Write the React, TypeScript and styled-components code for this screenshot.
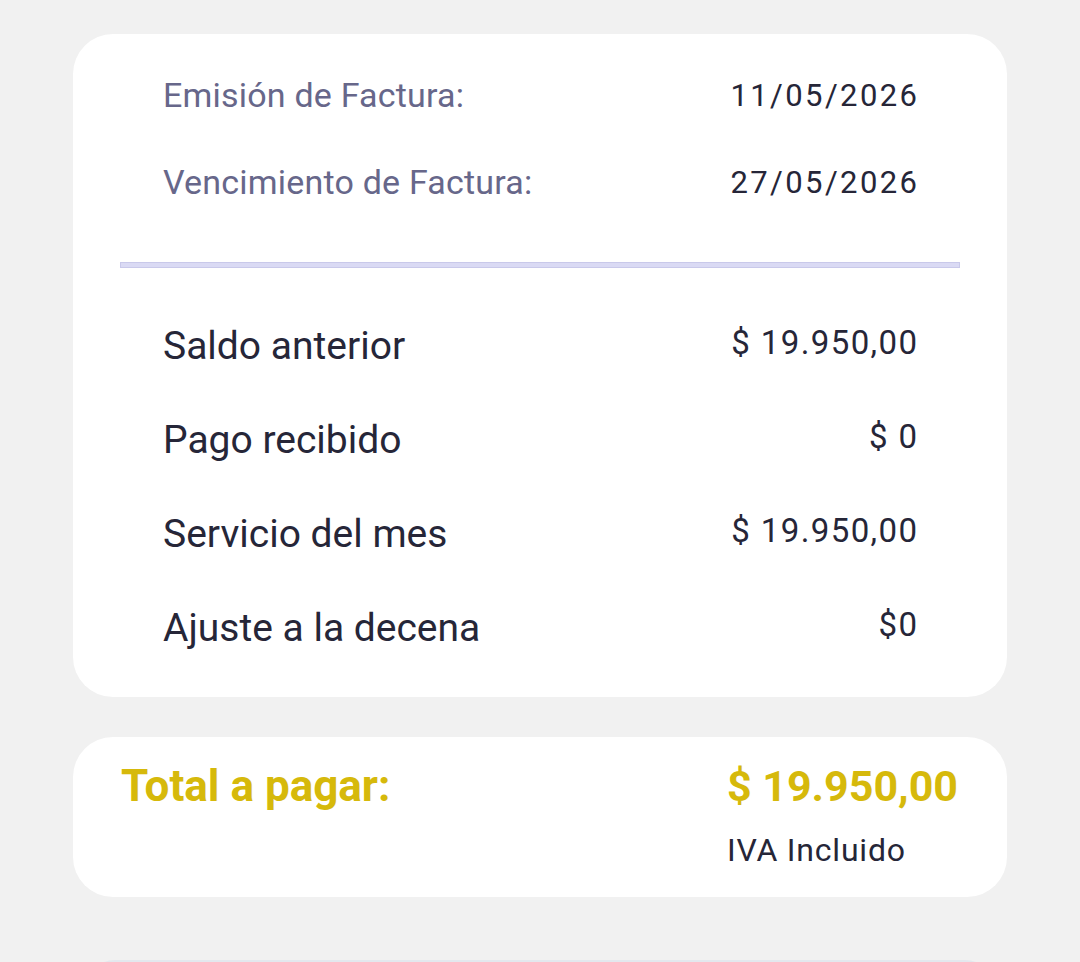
import styled, { createGlobalStyle } from "styled-components";

const GlobalStyle = createGlobalStyle`
  html, body {
    margin: 0;
    padding: 0;
    background: #f1f1f1;
  }

  body {
    font-family: Roboto, "Noto Sans", "Liberation Sans", sans-serif;
    -webkit-font-smoothing: antialiased;
  }
`;

const dates = [
  { label: "Emisión de Factura:", value: "11/05/2026" },
  { label: "Vencimiento de Factura:", value: "27/05/2026" },
];

const lines = [
  { label: "Saldo anterior", value: "$ 19.950,00" },
  { label: "Pago recibido", value: "$ 0" },
  { label: "Servicio del mes", value: "$ 19.950,00" },
  { label: "Ajuste a la decena", value: "$0" },
];

export default function App() {
  return (
    <>
      <GlobalStyle />
      <Page>
        <DetailCard>
          <DateList>
            {dates.map((row) => (
              <DateRow key={row.label}>
                <DateLabel>{row.label}</DateLabel>
                <DateValue>{row.value}</DateValue>
              </DateRow>
            ))}
          </DateList>

          <Divider />

          <LineList>
            {lines.map((row) => (
              <LineRow key={row.label}>
                <LineLabel>{row.label}</LineLabel>
                <LineValue>{row.value}</LineValue>
              </LineRow>
            ))}
          </LineList>
        </DetailCard>

        <TotalCard>
          <TotalLabel>Total a pagar:</TotalLabel>
          <TotalBlock>
            <TotalAmount>$ 19.950,00</TotalAmount>
            <TaxNote>IVA Incluido</TaxNote>
          </TotalBlock>
        </TotalCard>

        <NextSection />
      </Page>
    </>
  );
}

const Page = styled.main`
  display: flex;
  flex-direction: column;
  gap: 40px;
  min-height: 962px;
  padding: 34px 73px 0;
  box-sizing: border-box;
  overflow: hidden;
`;

const DetailCard = styled.section`
  display: flex;
  flex-direction: column;
  height: 663px;
  box-sizing: border-box;
  padding: 40px 47px 0;
  border-radius: 40px;
  background: #fff;
`;

const DateList = styled.div`
  display: flex;
  flex-direction: column;
  gap: 45px;
  padding: 0 43px 0 43px;
`;

const DateRow = styled.div`
  display: flex;
  align-items: center;
  justify-content: space-between;
  height: 42px;
`;

const DateLabel = styled.span`
  color: #67678a;
  font-size: 34px;
  letter-spacing: 0.2px;
`;

const DateValue = styled.span`
  margin-right: -2.4px;
  color: #262638;
  font-size: 31px;
  letter-spacing: 2.4px;
`;

const Divider = styled.hr`
  height: 4px;
  margin: 59px 0 0;
  border: 1px solid #c9c9ea;
  background: #dadaf4;
`;

const LineList = styled.div`
  display: flex;
  flex-direction: column;
  gap: 52px;
  padding: 57px 43px 0;
`;

const LineRow = styled.div`
  display: flex;
  align-items: flex-start;
  justify-content: space-between;
  height: 42px;
`;

const LineLabel = styled.span`
  color: #262638;
  font-size: 39px;
  line-height: 42px;
`;

const LineValue = styled.span`
  margin-right: -1.4px;
  color: #262638;
  font-size: 33px;
  line-height: 36px;
  letter-spacing: 1.4px;
`;

const TotalCard = styled.section`
  display: flex;
  align-items: flex-start;
  justify-content: space-between;
  height: 160px;
  box-sizing: border-box;
  padding: 24px 49px 0 48px;
  border-radius: 40px;
  background: #fff;
`;

const TotalLabel = styled.span`
  color: #d6b90b;
  font-size: 44px;
  font-weight: 700;
  line-height: 50px;
`;

const TotalBlock = styled.div`
  display: flex;
  flex-direction: column;
  gap: 21px;
`;

const TotalAmount = styled.span`
  color: #d6b90b;
  font-size: 43px;
  font-weight: 700;
  line-height: 50px;
`;

const TaxNote = styled.span`
  color: #262638;
  font-size: 32px;
  line-height: 36px;
  letter-spacing: 0.8px;
`;

const NextSection = styled.div`
  height: 40px;
  margin: 23px 12px 0;
  border-top: 2px solid #e3e8ee;
  border-radius: 30px 30px 0 0;
  background: #f1f1f1;
`;
